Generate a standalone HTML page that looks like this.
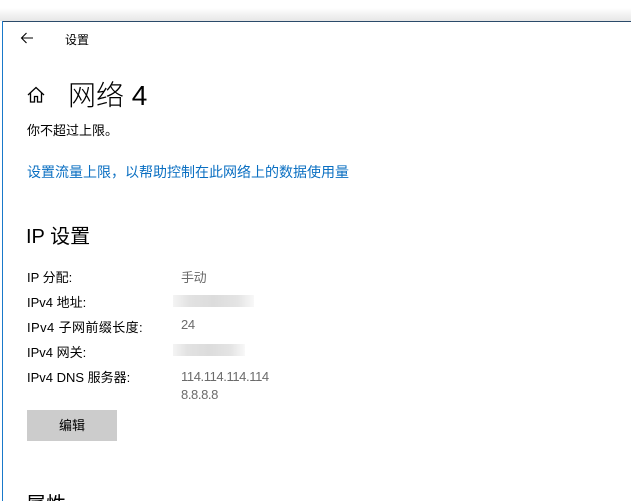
<!DOCTYPE html>
<html><head><meta charset="utf-8"><style>
html,body{margin:0;padding:0;width:631px;height:501px;overflow:hidden;background:#fff;position:relative;font-family:"Liberation Sans","Noto Sans CJK SC",sans-serif;color:#000}
.a{position:absolute;white-space:nowrap}
.top{position:absolute;left:0;top:0;width:631px;height:21px;background:linear-gradient(#fff,#fff 8px,#e6e6e6)}
.tb{position:absolute;left:2px;top:21px;width:629px;height:1px;background:#2b4a6a}
.lb{position:absolute;left:2px;top:21px;width:1px;height:480px;background:#1979ca}
.lbl{font-size:13px;left:27px}
.val{font-size:13px;left:181px;color:#6b6b6b;letter-spacing:-0.4px}
.blur{position:absolute;height:12px;background:linear-gradient(90deg,#f4f4f4,#e2e2e2 20%,#dcdcdc 50%,#e4e4e4 80%,#f8f8f8)}
</style></head><body>
<div class="top"></div><div class="tb"></div><div class="lb"></div>
<svg class="a" style="left:20px;top:32px" width="14" height="12" viewBox="0 0 14 12"><path d="M13 6H1.5M6.5 1L1.5 6l5 5" fill="none" stroke="#000" stroke-width="1.1"/></svg>
<div class="a" style="left:65px;top:31px;font-size:12px">设置</div>
<svg class="a" style="left:27px;top:86px" width="18" height="17" viewBox="0 0 18 17"><path d="M1 9L9 1.5 17 9M3.5 7v9h4v-5.5h3V16h4V7" fill="none" stroke="#000" stroke-width="1.3"/></svg>
<div class="a" style="left:68px;top:74px;font-size:28px;font-weight:300">网络 4</div>
<div class="a" style="left:27px;top:120px;font-size:13px">你不超过上限。</div>
<div class="a" style="left:27px;top:162px;font-size:14px;color:#0a6fc2">设置流量上限，以帮助控制在此网络上的数据使用量</div>
<div class="a" style="left:26px;top:220px;font-size:20px">IP 设置</div>
<div class="a lbl" style="top:267px">IP 分配:</div><div class="a val" style="top:267px">手动</div>
<div class="a lbl" style="top:292px">IPv4 地址:</div><div class="blur" style="left:173px;top:295px;width:81px"></div>
<div class="a lbl" style="top:317px;letter-spacing:0.4px">IPv4 子网前缀长度:</div><div class="a val" style="top:317px">24</div>
<div class="a lbl" style="top:342px">IPv4 网关:</div><div class="blur" style="left:173px;top:344px;width:72px"></div>
<div class="a lbl" style="top:367px">IPv4 DNS 服务器:</div><div class="a val" style="top:368px;line-height:18px">114.114.114.114<br>8.8.8.8</div>
<div class="a" style="left:27px;top:410px;width:90px;height:31px;background:#cccccc;font-size:13px;text-align:center;line-height:31px">编辑</div>
<div class="a" style="left:26px;top:488px;font-size:20px">属性</div>
</body></html>
